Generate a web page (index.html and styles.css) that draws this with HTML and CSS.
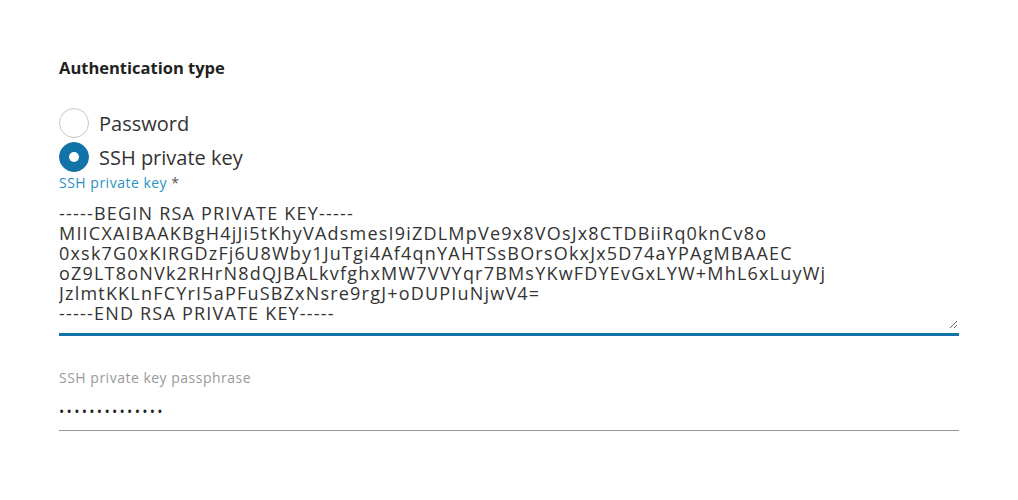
FILE: index.html
```html
<!DOCTYPE html>
<html>
<head>
<meta charset="utf-8">
<link rel="stylesheet" href="styles.css">
</head>
<body>
<div class="form">
  <div class="section-title">Authentication type</div>
  <div class="radios">
    <label class="radio"><span class="circle"></span><span class="radio-text">Password</span></label>
    <label class="radio"><span class="circle checked"></span><span class="radio-text">SSH private key</span></label>
  </div>
  <div class="field">
    <div class="field-label active">SSH private key <span class="req">*</span></div>
    <div class="key-wrap">
    <textarea class="key" rows="6" spellcheck="false">-----BEGIN RSA PRIVATE KEY-----
MIICXAIBAAKBgH4jJi5tKhyVAdsmesI9iZDLMpVe9x8VOsJx8CTDBiiRq0knCv8o
0xsk7G0xKIRGDzFj6U8Wby1JuTgi4Af4qnYAHTSsBOrsOkxJx5D74aYPAgMBAAEC
oZ9LT8oNVk2RHrN8dQJBALkvfghxMW7VVYqr7BMsYKwFDYEvGxLYW+MhL6xLuyWj
JzlmtKKLnFCYrI5aPFuSBZxNsre9rgJ+oDUPIuNjwV4=
-----END RSA PRIVATE KEY-----</textarea>
    </div>
  </div>
  <div class="field pass">
    <div class="field-label">SSH private key passphrase</div>
    <input class="passinput" type="password" value="abcdefghijklmn">
  </div>
</div>
</body>
</html>
```
FILE: styles.css
```css
html, body {
  margin: 0;
  padding: 0;
  background: #ffffff;
}
body {
  font-family: "Open Sans", "Noto Sans", sans-serif;
  color: #333333;
}
.form {
  width: 900px;
  padding: 58px 0 0 59px;
}
.section-title {
  font-size: 16.5px;
  font-weight: 700;
  color: #222;
  line-height: 20px;
}
.radios {
  margin-top: 30px;
  display: flex;
  flex-direction: column;
  gap: 4px;
}
.radio {
  display: flex;
  align-items: center;
  height: 30px;
}
.circle {
  width: 28px;
  height: 28px;
  border: 1px solid #c8c8c8;
  border-radius: 50%;
  box-sizing: content-box;
  background: #fff;
  position: relative;
  flex: none;
}
.circle.checked {
  background: #1173a7;
  border-color: #1173a7;
}
.circle.checked::after {
  content: "";
  position: absolute;
  left: 9px;
  top: 9px;
  width: 10px;
  height: 10px;
  border-radius: 50%;
  background: #fff;
}
.radio-text {
  margin-left: 10px;
  font-size: 20px;
  color: #333;
}
.field-label {
  font-size: 14px;
  letter-spacing: 0.5px;
  color: #999;
  line-height: 18px;
}
.field-label.active {
  color: #2a91c4;
  margin-top: 2px;
}
.req {
  color: #555;
}
.key-wrap {
  width: 900px;
  margin-top: 11px;
  padding-bottom: 4px;
  border-bottom: 3px solid #1173a7;
}
.key {
  display: block;
  width: 899px;
  box-sizing: border-box;
  margin: 0;
  padding: 0 0 6px 0;
  height: 126px;
  border: none;
  outline: none;
  resize: vertical;
  font-family: "Open Sans", "Noto Sans", sans-serif;
  font-size: 18px;
  letter-spacing: 1.2px;
  line-height: 20px;
  color: #333;
  overflow: hidden;
  white-space: pre;
}
.pass {
  margin-top: 33px;
}
.passinput {
  display: block;
  width: 900px;
  box-sizing: border-box;
  margin-top: 15px;
  padding: 0 0 9px 0;
  border: none;
  border-bottom: 1px solid #999;
  outline: none;
  font-family: "Open Sans", sans-serif;
  font-size: 14px;
  letter-spacing: 2.3px;
  color: #222;
}
```
